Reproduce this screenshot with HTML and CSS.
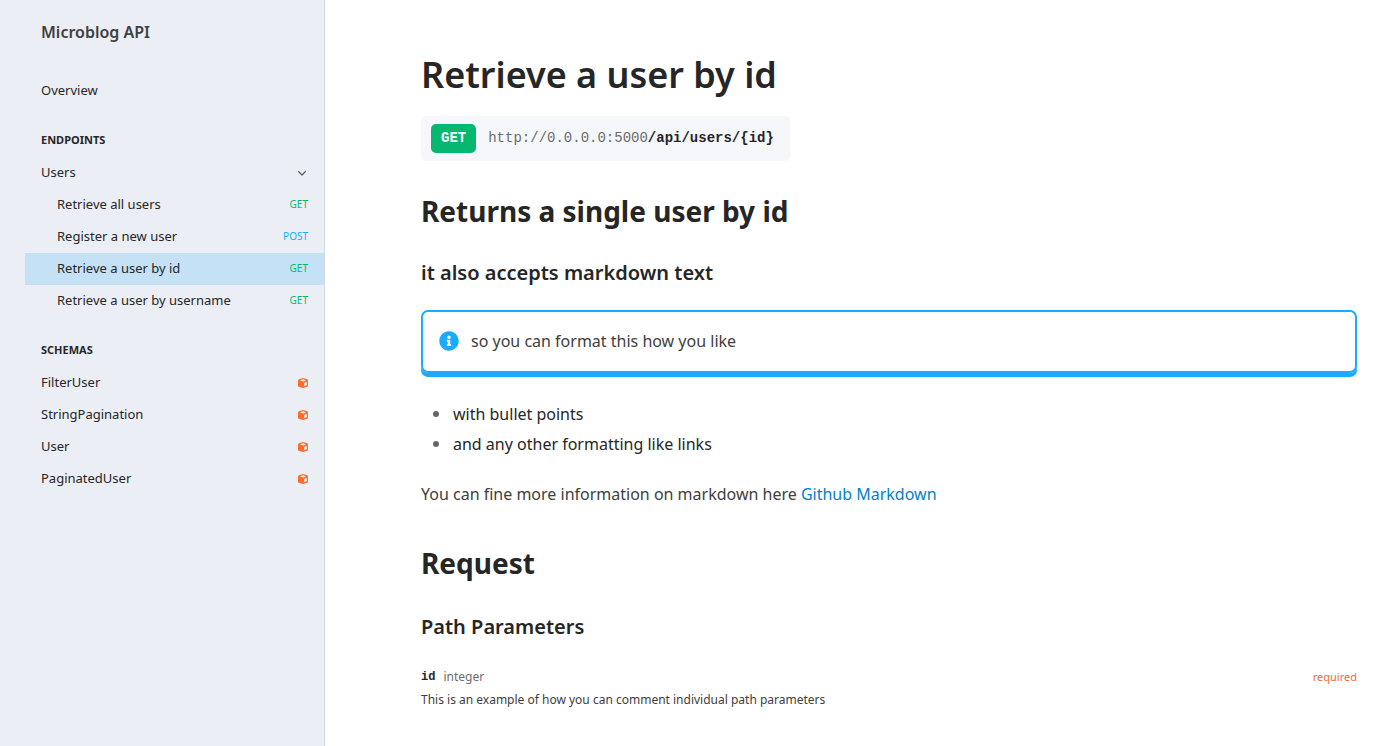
FILE: index.html
```html
<!DOCTYPE html>
<html lang="en">
<head>
<meta charset="utf-8">
<title>Microblog API</title>
<link rel="stylesheet" href="styles.css">
</head>
<body>
<svg class="sprite" aria-hidden="true">
  <symbol id="cube" viewBox="0 0 20 20"><path fill-rule="evenodd" d="M10 0 17.500 2Q20 3 20 5V15Q20 17 17.500 18L10 20 2.500 18Q0 17 0 15V5Q0 3 2.500 2ZM10 2.400 3.500 4.400 10 6.800 16.500 4.400ZM12.500 9.500V16.500L17.500 14.500V7.500Z"/></symbol>
</svg>
<div class="layout">
  <aside class="sidebar">
    <h4 class="brand">Microblog API</h4>
    <nav class="nav">
      <a class="item" href="#overview">Overview</a>
      <h5 class="group">ENDPOINTS</h5>
      <button class="item" type="button" aria-expanded="true">Users
        <svg class="icon chevron" viewBox="0 0 12 12" aria-hidden="true"><path d="M2.300 4.300 6 8l3.700-3.700"/></svg>
      </button>
      <a class="item child" href="#all">Retrieve all users <span class="method get">GET</span></a>
      <a class="item child" href="#register">Register a new user <span class="method post">POST</span></a>
      <a class="item child active" href="#id" aria-current="page">Retrieve a user by id <span class="method get">GET</span></a>
      <a class="item child" href="#username">Retrieve a user by username <span class="method get">GET</span></a>
      <h5 class="group">SCHEMAS</h5>
      <a class="item" href="#filteruser">FilterUser <svg class="icon cube" aria-hidden="true"><use href="#cube"/></svg></a>
      <a class="item" href="#stringpagination">StringPagination <svg class="icon cube" aria-hidden="true"><use href="#cube"/></svg></a>
      <a class="item" href="#user">User <svg class="icon cube" aria-hidden="true"><use href="#cube"/></svg></a>
      <a class="item" href="#paginateduser">PaginatedUser <svg class="icon cube" aria-hidden="true"><use href="#cube"/></svg></a>
    </nav>
  </aside>
  <main class="content">
    <h1>Retrieve a user by id</h1>
    <div class="endpoint"><span class="badge">GET</span><span class="url">http://0.0.0.0:5000<b>/api/users/{id}</b></span></div>
    <h2>Returns a single user by id</h2>
    <h3>it also accepts markdown text</h3>
    <blockquote class="callout">
      <svg class="info" viewBox="0 0 512 512" aria-hidden="true"><path d="M256 8C119 8 8 119 8 256s111 248 248 248 248-111 248-248S393 8 256 8zm0 110c23.200 0 42 18.800 42 42s-18.800 42-42 42-42-18.800-42-42 18.800-42 42-42zm56 254c0 6.600-5.400 12-12 12h-88c-6.600 0-12-5.400-12-12v-24c0-6.600 5.400-12 12-12h12v-64h-12c-6.600 0-12-5.400-12-12v-24c0-6.600 5.400-12 12-12h64c6.600 0 12 5.400 12 12v100h12c6.600 0 12 5.400 12 12v24z"/></svg>
      <p>so you can format this how you like</p>
    </blockquote>
    <ul class="points">
      <li>with bullet points</li>
      <li>and any other formatting like links</li>
    </ul>
    <p class="more">You can fine more information on markdown here <a href="#markdown">Github Markdown</a></p>
    <h2 class="request">Request</h2>
    <h3 class="params">Path Parameters</h3>
    <div class="param">
      <div class="param-head"><b class="name">id</b><span class="type">integer</span><span class="required">required</span></div>
      <p class="desc">This is an example of how you can comment individual path parameters</p>
    </div>
  </main>
</div>
</body>
</html>
```
FILE: styles.css
```css
* { box-sizing: border-box; }
body, h1, h2, h3, h4, h5, p, ul, blockquote { margin: 0; padding: 0; }
body { font-family: "Noto Sans", sans-serif; font-size: 16px; line-height: 24px; color: #262626; background: #fff; }
a { color: #0081cc; text-decoration: none; }
.sprite { display: none; }
.layout { display: flex; min-height: 100vh; }
.sidebar { flex: none; width: 325px; padding: 20px 0 0 25px; background: #ebeef5; border-right: 1px solid #d0d8e8; }
.brand { padding-left: 16px; font-size: 16px; font-weight: 600; line-height: 24px; color: #404040; }
.nav { display: flex; flex-direction: column; margin-top: 31px; }
.item { display: flex; align-items: center; justify-content: space-between; height: 32px; padding: 0 16px 2px; border: 0; background: none; font: 13px/20px "Noto Sans", sans-serif; color: #262626; text-align: left; }
.child { padding-left: 32px; }
.active { background: #c4e1f6; }
.group { margin: 23px 0 7px; padding: 0 16px; font-size: 11px; font-weight: 700; line-height: 20px; }
.method { font-size: 10px; }
.get { color: #05b870; }
.post { color: #19abff; }
.icon { margin-top: 2px; }
.chevron { width: 12px; height: 12px; fill: none; stroke: #606060; stroke-width: 1.3; }
.cube { width: 10px; height: 10px; fill: #f96e2b; }
.content { flex: 1; min-width: 0; padding: 50px 31px 32px 96px; }
h1 { font-size: 36px; font-weight: 600; line-height: 50px; }
h2 { margin-top: 29px; font-size: 28px; font-weight: 700; line-height: 42px; }
h3 { margin-top: 25px; font-size: 20px; font-weight: 600; line-height: 32px; }
.endpoint { display: flex; align-items: baseline; width: fit-content; margin-top: 16px; padding: 8px 16px 8px 10px; gap: 12px; border-radius: 5px; background: #f6f7fb; font: 14px/20px "Liberation Mono", monospace; }
.badge { padding: 4px 10px 5px; border-radius: 5px; background: #05b870; color: #fff; font-weight: 700; }
.url { color: #6b6b6b; }
.url b { color: #262626; }
.callout { display: flex; align-items: center; gap: 12px; margin-top: 21px; padding: 17px 16px 18px; border: 2px solid #19abff; border-radius: 7px; box-shadow: 0 4px 0 #19abff; color: #404040; }
.info { width: 20px; height: 20px; fill: #19abff; }
.points { margin-top: 26px; padding-left: 12px; line-height: 30px; list-style: none; }
.points li { display: flex; align-items: center; gap: 14px; }
.points li::before { content: ""; width: 6px; height: 6px; border-radius: 50%; background: #666; }
.more { margin-top: 23px; color: #404040; }
.request { margin-top: 36px; }
.params { margin-top: 27px; }
.param { margin-top: 23px; font-size: 12px; line-height: 22px; }
.param-head { display: flex; gap: 8px; }
.name { font-family: "Liberation Mono", monospace; }
.type { color: #6b6b6b; }
.required { margin-left: auto; font-size: 11px; color: #f26b2f; }
.desc { margin-top: 1px; color: #404040; }
```
